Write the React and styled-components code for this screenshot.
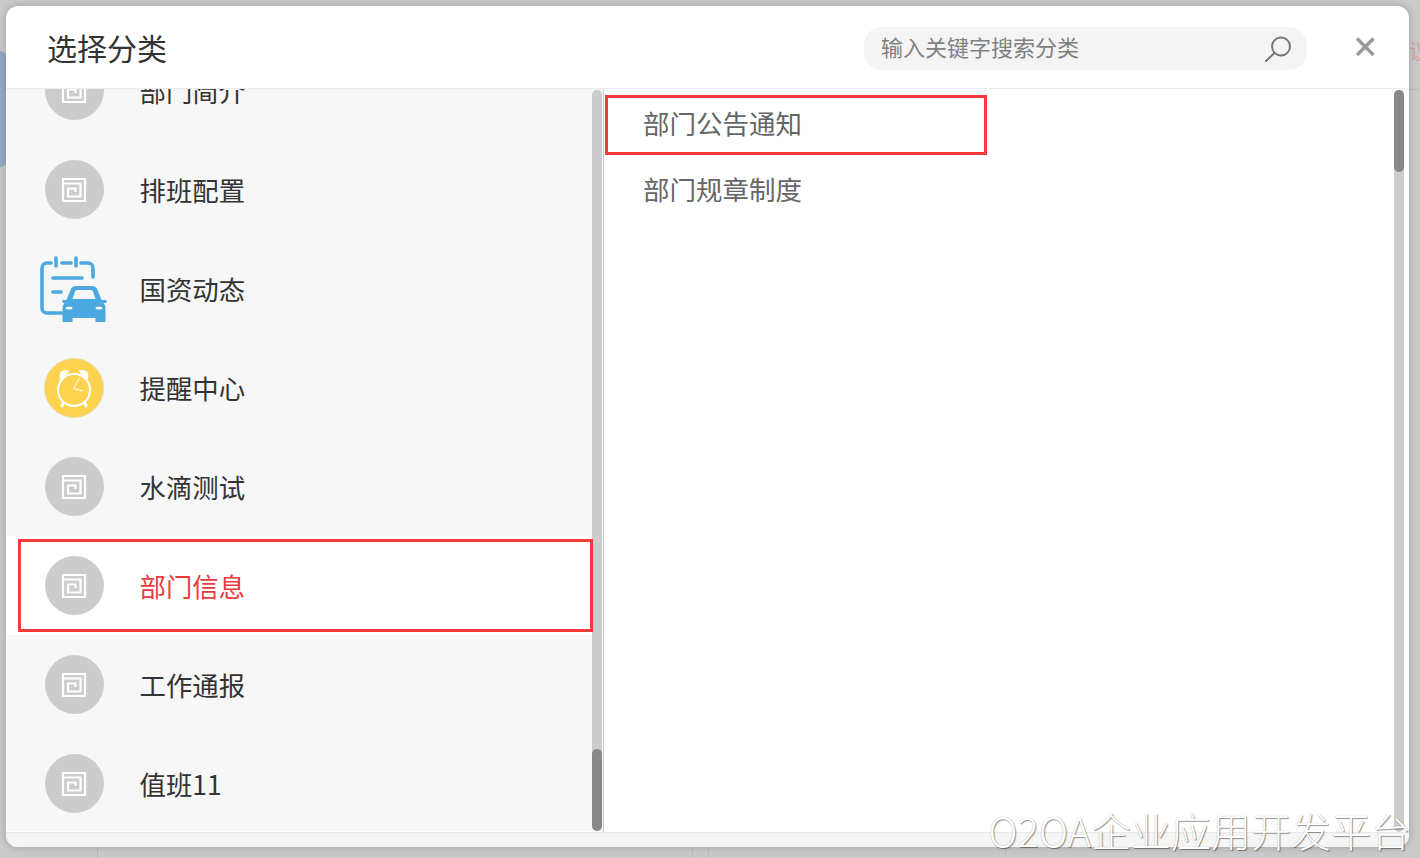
import React from "react";
import styled, { createGlobalStyle } from "styled-components";

const categories = [
  { name: "部门简介" },
  { name: "排班配置" },
  { name: "国资动态", icon: "car" },
  { name: "提醒中心", icon: "clock" },
  { name: "水滴测试" },
  { name: "部门信息", active: true },
  { name: "工作通报" },
  { name: "值班11" },
];

const subCategories = [
  { name: "部门公告通知", active: true },
  { name: "部门规章制度" },
];

function MazeIcon() {
  return (
    <Circle>
      <svg width="36" height="36" viewBox="0 0 36 36" fill="none" stroke="#fff" strokeWidth="2.2">
        <path d="M7 7H29V29H7Z" />
        <path d="M7 11.5H24.5V24.5H12V16.5H19.5V20" />
      </svg>
    </Circle>
  );
}

function CarIcon() {
  return (
    <svg width="72" height="72" viewBox="0 0 72 72" fill="none">
      <g stroke="#4aa9e0" strokeWidth="3.6" strokeLinecap="round">
        <path d="M13 10H9a5 5 0 0 0-5 5V55a5 5 0 0 0 5 5H24" />
        <path d="M43 10H50a5 5 0 0 1 5 5V24" />
        <path d="M24 10H33" />
        <path d="M18 5V13M38 5V13" />
        <path d="M15 25H44M15 39H23" />
      </g>
      <g transform="translate(-2.5 0)">
        <path
          d="M27 47H31L35 37Q36 33 41 33H56Q61 33 62 37L66 47H71V50H68Q70 52 70 56V69H60V65H37V69H27V56Q27 52 29 50H27Z"
          fill="#4aa9e0"
        />
        <path d="M37 46L39.5 38.5Q40 37 42 37H55Q57 37 57.5 38.5L60 46Z" fill="#f7f7f7" />
        <ellipse cx="33.5" cy="55" rx="3.5" ry="1.6" fill="#f7f7f7" />
        <ellipse cx="63.5" cy="55" rx="3.5" ry="1.6" fill="#f7f7f7" />
      </g>
    </svg>
  );
}

function ClockIcon() {
  return (
    <svg width="72" height="72" viewBox="-4 -4 72 72" fill="none">
      <circle cx="32" cy="32" r="29.5" fill="#fdd24f" stroke="#e6dcae" strokeWidth="1" />
      <circle cx="32" cy="34" r="16" stroke="#fff" strokeWidth="2" />
      <path d="M19 23Q17 14 26 15ZM45 23Q47 14 38 15Z" fill="#fff" stroke="#fff" strokeWidth="2" strokeLinejoin="round" />
      <path d="M21 47L20 50M43 47L44 50" stroke="#fff" strokeWidth="3" strokeLinecap="round" />
      <path d="M31.5 32.5L38 21M31.5 32.5L41 35" stroke="#fff" strokeWidth="1" />
    </svg>
  );
}

function App() {
  return (
    <>
      <GlobalStyle />
      <Page>
        <BlueTab />
        <FaintText>议</FaintText>
        <BackLine $horizontal $left={1409} $top={89} />
        <BackLine $left={97} $top={847} />
        <BackLine $left={692} $top={847} />
        <BackLine $left={708} $top={847} />
        <BackLine $left={1005} $top={847} />
        <Dialog>
          <Header>
            <Title>选择分类</Title>
            <SearchBox>
              <SearchInput placeholder="输入关键字搜索分类" />
              <svg width="30" height="30" viewBox="0 0 30 30" fill="none" stroke="#777" strokeWidth="2">
                <circle cx="18" cy="12.5" r="9" />
                <path d="M11.5 19L3 27" strokeLinecap="round" />
              </svg>
            </SearchBox>
            <CloseButton>
              <svg width="24" height="24" viewBox="0 0 24 24" stroke="#999" strokeWidth="3.4" fill="none">
                <path d="M4 3.5L20.5 20M20.5 3.5L4 20" />
              </svg>
            </CloseButton>
          </Header>
          <Body>
            <LeftPane>
              <CategoryList>
                {categories.map((item) => (
                  <CategoryRow key={item.name} $active={item.active}>
                    <IconSlot>
                      {item.icon === "car" ? <CarIcon /> : item.icon === "clock" ? <ClockIcon /> : <MazeIcon />}
                    </IconSlot>
                    <CategoryName $active={item.active}>{item.name}</CategoryName>
                  </CategoryRow>
                ))}
              </CategoryList>
              <Track>
                <Thumb $bottom />
              </Track>
            </LeftPane>
            <RightPane>
              <SubList>
                {subCategories.map((item) => (
                  <SubItem key={item.name} $active={item.active}>
                    {item.name}
                  </SubItem>
                ))}
              </SubList>
              <Track>
                <Thumb />
              </Track>
            </RightPane>
          </Body>
          <Footer />
        </Dialog>
        <Watermark>O2OA企业应用开发平台</Watermark>
      </Page>
    </>
  );
}

export default App;

const GlobalStyle = createGlobalStyle`
  html, body {
    margin: 0;
    padding: 0;
    background: #cacaca;
  }
  * {
    box-sizing: border-box;
  }
`;

const Page = styled.div`
  position: relative;
  width: 1420px;
  height: 858px;
  overflow: hidden;
  padding: 6px 11px 11px 6px;
  font-family: "Noto Sans CJK SC", "Noto Sans", sans-serif;
`;

const BlueTab = styled.div`
  position: absolute;
  left: -20px;
  top: 50px;
  width: 30px;
  height: 118px;
  border-radius: 14px;
  background: #95a9c6;
`;

const FaintText = styled.span`
  position: absolute;
  left: 1409px;
  top: 33px;
  font-size: 22px;
  color: #d9a3a3;
`;

const BackLine = styled.div`
  position: absolute;
  left: ${(p) => p.$left}px;
  top: ${(p) => p.$top}px;
  width: ${(p) => (p.$horizontal ? "11px" : "1px")};
  height: ${(p) => (p.$horizontal ? "1px" : "11px")};
  background: #bcbcbc;
`;

const Dialog = styled.div`
  position: relative;
  display: flex;
  flex-direction: column;
  height: 100%;
  background: #fff;
  border-radius: 12px;
  overflow: hidden;
  box-shadow: 0 0 8px rgba(0, 0, 0, 0.22);
`;

const Header = styled.div`
  flex: none;
  display: flex;
  align-items: center;
  height: 83px;
  padding: 3px 32px 0 41px;
  border-bottom: 1px solid #ebebeb;
`;

const Title = styled.h1`
  margin: 0 0 4px;
  font-size: 30px;
  font-weight: 400;
  color: #333;
`;

const SearchBox = styled.div`
  display: flex;
  align-items: center;
  width: 443px;
  height: 43px;
  margin-left: auto;
  padding: 0 14px 0 17px;
  border-radius: 18px;
  background: #f4f4f4;
`;

const SearchInput = styled.input`
  flex: 1;
  min-width: 0;
  margin-bottom: 5px;
  padding: 0;
  border: none;
  outline: none;
  background: none;
  font: inherit;
  font-size: 22px;

  &::placeholder {
    color: #808080;
    opacity: 1;
  }
`;

const CloseButton = styled.div`
  display: flex;
  margin-left: 46px;
  margin-top: -3px;
`;

const Body = styled.div`
  flex: 1;
  min-height: 0;
  display: flex;
`;

const LeftPane = styled.div`
  display: flex;
  width: 597px;
  margin-left: 1px;
  padding-right: 1px;
  overflow: hidden;
  background: #f7f7f7;
  border-right: 1px solid #ccc;
  border-bottom: 1px solid #fff;
`;

const CategoryList = styled.div`
  flex: 1;
  margin-top: -48px;
`;

const CategoryRow = styled.div`
  position: relative;
  display: flex;
  align-items: center;
  gap: 29.5px;
  height: 99px;
  padding-left: 31px;
  background: ${(p) => (p.$active ? "#fff" : "transparent")};

  ${(p) =>
    p.$active &&
    `
    &::after {
      content: "";
      position: absolute;
      z-index: 1;
      left: 11px;
      right: -1px;
      top: 3px;
      bottom: 3px;
      border: 3px solid #f73a3a;
    }
  `}
`;

const IconSlot = styled.div`
  flex: none;
  display: flex;
  align-items: center;
  justify-content: center;
  width: 72px;
  height: 72px;
`;

const Circle = styled.div`
  display: flex;
  align-items: center;
  justify-content: center;
  width: 59px;
  height: 59px;
  border-radius: 50%;
  background: #ccc;
`;

const CategoryName = styled.span`
  font-size: 26.4px;
  color: ${(p) => (p.$active ? "#e93b3b" : "#333")};
`;

const Track = styled.div`
  flex: none;
  display: flex;
  flex-direction: column;
  width: 10px;
  margin-top: 1px;
  border-radius: 5px;
  background: #ccc;
`;

const Thumb = styled.div`
  width: 10px;
  height: 82px;
  margin-top: ${(p) => (p.$bottom ? "auto" : "0")};
  border-radius: 5px;
  background: #888;
`;

const RightPane = styled.div`
  flex: 1;
  display: flex;
  padding-right: 5px;
  background: #fff;
`;

const SubList = styled.div`
  flex: 1;
  display: flex;
  flex-direction: column;
  gap: 6px;
  padding: 6px 0 0 1px;
`;

const SubItem = styled.div`
  display: flex;
  align-items: center;
  width: 382px;
  height: 60px;
  padding: 0 0 6px 35px;
  border: 3px solid ${(p) => (p.$active ? "#f73a3a" : "transparent")};
  font-size: 26.5px;
  color: #666;
`;

const Footer = styled.div`
  flex: none;
  height: 15px;
  background: #f5f5f5;
  border-top: 1px solid #e9e9e9;
`;

const Watermark = styled.div`
  position: absolute;
  right: 9px;
  bottom: 3px;
  font-size: 40px;
  font-weight: 300;
  line-height: 50px;
  white-space: nowrap;
  color: #fff;
  text-shadow: 1px 1px 1px rgba(0, 0, 0, 0.4), 0 0 1px rgba(0, 0, 0, 0.3);
`;
